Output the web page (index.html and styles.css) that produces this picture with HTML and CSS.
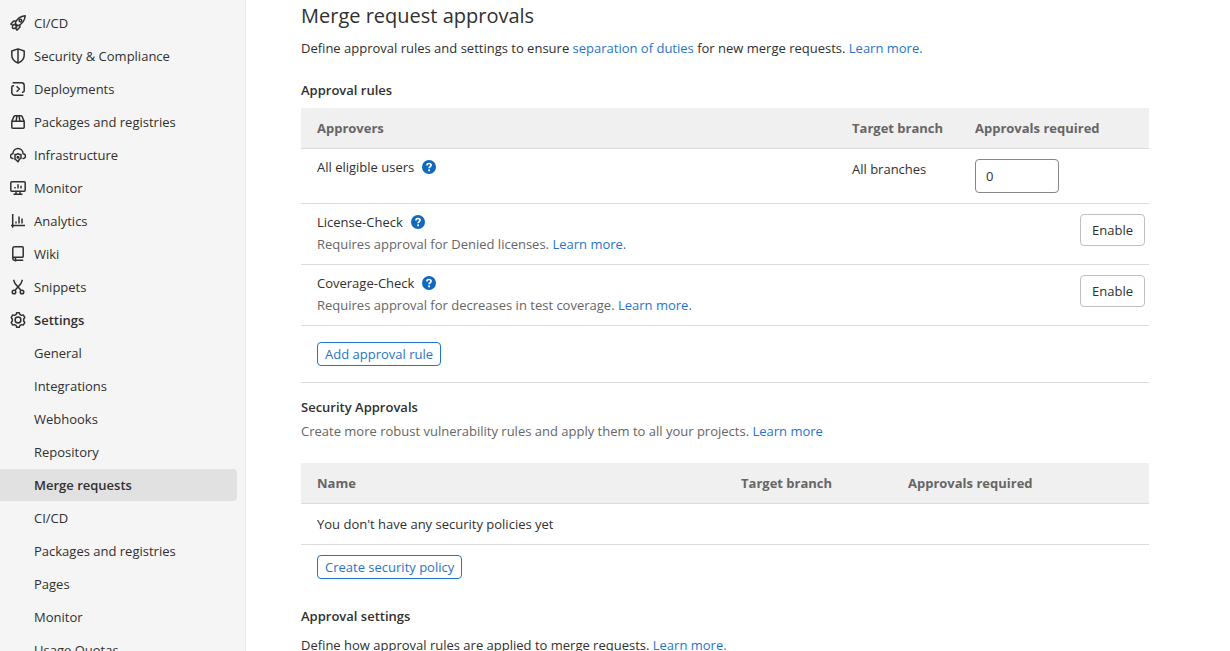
FILE: index.html
```html
<!DOCTYPE html>
<html lang="en">
<head>
<meta charset="utf-8">
<meta name="viewport" content="width=device-width, initial-scale=1">
<title>Merge request approvals</title>
<link rel="stylesheet" href="styles.css">
</head>
<body>
<svg class="sprite" aria-hidden="true">
  <symbol id="help" viewBox="0 0 16 16">
    <circle cx="8" cy="8" r="8" fill="#1068bf"/>
    <path d="M5.6 6.200C5.600 4.800 6.600 4 8 4s2.400.8 2.400 2.100c0 1.600-2.300 1.700-2.300 3.200" fill="none" stroke="#fff" stroke-width="1.9"/>
    <circle cx="8.100" cy="11.800" r="1.200" fill="#fff"/>
  </symbol>
</svg>
<div class="shell">
  <nav class="sidebar" aria-label="Project">
    <ul class="menu">
      <li><a class="item" href="#"><svg class="icon" viewBox="0 0 16 16"><path d="M5.200 8.200C7 3.800 10.300 1.300 15.200.8c-.4 4.900-2.900 8.200-7.400 10zM5.200 8.200l2.600 2.600M6.300 6.100H3.700L.9 9.100l2 1.200M9.900 9.700v2.600L6.900 15.100l-1.200-2M4.300 9.300c-2 1-2 3.100-1.600 4 1.200.3 3.200.2 4.100-1.600M4.300 9.300l2.500 2.400"/><circle cx="10.400" cy="5.600" r="1.300"/></svg>CI/CD</a></li>
      <li><a class="item" href="#"><svg class="icon" viewBox="0 0 16 16"><path d="M8 .9 14.200 3v4.200c0 3.500-2.200 6.200-6.200 7.900C4 13.400 1.800 10.700 1.800 7.200V3zM8 .9v14.200"/></svg>Security &amp; Compliance</a></li>
      <li><a class="item" href="#"><svg class="icon" viewBox="0 0 16 16"><path d="M2.600 1.800h8.900a2.700 2.700 0 0 1 2.700 2.700v5.300c0 .8-.6 1.400-1.400 1.400h-.9M13.400 14.200H4.500a2.700 2.700 0 0 1-2.700-2.700V6.200c0-.8.6-1.400 1.400-1.400h.9M6.600 5.200 9.400 8l-2.800 2.800"/></svg>Deployments</a></li>
      <li><a class="item" href="#"><svg class="icon" viewBox="0 0 16 16"><path d="M1.800 7.200h12.400v6c0 .6-.4 1-1 1H2.800c-.6 0-1-.4-1-1zM1.800 7.200l2.100-4.600c.3-.5.6-.8 1.200-.8h5.800c.6 0 .9.300 1.200.8l2.100 4.600M7 1.800l-.9 5.400M9 1.800l.9 5.400"/></svg>Packages and registries</a></li>
      <li><a class="item" href="#"><svg class="icon" viewBox="0 0 16 16"><path d="M3.500 11.500H3A2.400 2.400 0 0 1 2.900 6.700C3 3.700 5.200 1.400 8 1.400s5 2.300 5.100 5.300a2.400 2.400 0 0 1-.1 4.800h-.5M8 6.600l1.300.8 1.700.1v3.800l-1.500.9L8 14.800l-1.500-1.600-1.500-.9V7.500l1.700-.1z"/><circle cx="8" cy="10.200" r=".8"/></svg>Infrastructure</a></li>
      <li><a class="item" href="#"><svg class="icon" viewBox="0 0 16 16"><path d="M1.700 1.800h12.600c.5 0 .9.400.9.900v7.600c0 .5-.4.900-.9.900H1.700c-.5 0-.9-.4-.9-.9V2.700c0-.5.400-.9.900-.9zM6 11.200v3M10 11.200v3M3.500 14.200h9M5 7.100v1.500M8 4.200v4.400M11 5.700v2.900"/></svg>Monitor</a></li>
      <li><a class="item" href="#"><svg class="icon" viewBox="0 0 16 16"><path d="M2.700 1v13.800M1 12.400h14M6 8.500v2M9 3.500v7M12 5.500v5"/></svg>Analytics</a></li>
      <li><a class="item" href="#"><svg class="icon" viewBox="0 0 16 16"><path d="M13.200 11.200V1.800c0-.6-.4-1-1-1H4.500a1.700 1.700 0 0 0-1.700 1.700v10.100c0 .9.700 1.600 1.600 1.600h8.800M13.200 11.200H4.300c-.9 0-1.500.7-1.500 1.500M5.500 11.200v4.300"/></svg>Wiki</a></li>
      <li><a class="item" href="#"><svg class="icon" viewBox="0 0 16 16"><path d="M3.600.7 5 4.600l5.900 6.700M12.400.7 11 4.600l-5.900 6.700"/><circle cx="4" cy="13" r="1.800"/><circle cx="12" cy="13" r="1.800"/></svg>Snippets</a></li>
      <li><a class="item strong" href="#"><svg class="icon" viewBox="0 0 16 16"><path d="M6.700.8h2.600l.5 1.600 1.700 1 1.700-.5 1.600 2.400L13.700 7v2l1.100 1.700-1.600 2.400-1.700-.5-1.700 1-.5 1.600H6.700l-.5-1.600-1.700-1-1.700.5-1.600-2.400L2.300 9V7L1.200 5.300l1.600-2.400 1.700.5 1.700-1z"/><circle cx="8" cy="8" r="2.900"/></svg>Settings</a>
        <ul class="menu submenu">
          <li><a class="item" href="#">General</a></li>
          <li><a class="item" href="#">Integrations</a></li>
          <li><a class="item" href="#">Webhooks</a></li>
          <li><a class="item" href="#">Repository</a></li>
          <li><a class="item strong active" href="#" aria-current="page">Merge requests</a></li>
          <li><a class="item" href="#">CI/CD</a></li>
          <li><a class="item" href="#">Packages and registries</a></li>
          <li><a class="item" href="#">Pages</a></li>
          <li><a class="item" href="#">Monitor</a></li>
          <li><a class="item" href="#">Usage Quotas</a></li>
        </ul>
      </li>
    </ul>
  </nav>
  <main class="content">
    <h1 class="title">Merge request approvals</h1>
    <p class="intro">Define approval rules and settings to ensure <a href="#">separation of duties</a> for new merge requests. <a href="#">Learn more.</a></p>

    <section>
      <h2 class="heading">Approval rules</h2>
      <table class="table rules">
        <colgroup><col><col class="col-branch"><col class="col-count"><col class="col-action"></colgroup>
        <thead>
          <tr><th scope="col">Approvers</th><th scope="col">Target branch</th><th scope="col" colspan="2" id="required">Approvals required</th></tr>
        </thead>
        <tbody>
          <tr>
            <td class="name">All eligible users<a class="help" href="#" aria-label="Help: eligible users"><svg viewBox="0 0 16 16"><use href="#help"/></svg></a></td>
            <td>All branches</td>
            <td><input class="count" type="text" inputmode="numeric" value="0" aria-labelledby="required"></td>
            <td></td>
          </tr>
          <tr>
            <td class="name" colspan="3">License-Check<a class="help" href="#" aria-label="Help: License-Check"><svg viewBox="0 0 16 16"><use href="#help"/></svg></a>
              <p class="muted">Requires approval for Denied licenses. <a href="#">Learn more.</a></p></td>
            <td class="action"><button class="button" type="button">Enable</button></td>
          </tr>
          <tr>
            <td class="name" colspan="3">Coverage-Check<a class="help" href="#" aria-label="Help: Coverage-Check"><svg viewBox="0 0 16 16"><use href="#help"/></svg></a>
              <p class="muted">Requires approval for decreases in test coverage. <a href="#">Learn more.</a></p></td>
            <td class="action"><button class="button" type="button">Enable</button></td>
          </tr>
        </tbody>
      </table>
      <div class="add-row"><button class="button small" type="button">Add approval rule</button></div>
    </section>

    <section class="security">
      <h2 class="heading">Security Approvals</h2>
      <p class="muted">Create more robust vulnerability rules and apply them to all your projects. <a href="#">Learn more</a></p>
      <table class="table policies">
        <colgroup><col class="col-half"><col class="col-policy-branch"><col></colgroup>
        <thead>
          <tr><th scope="col">Name</th><th scope="col">Target branch</th><th scope="col">Approvals required</th></tr>
        </thead>
        <tbody>
          <tr><td colspan="3">You don't have any security policies yet</td></tr>
        </tbody>
      </table>
      <div class="create-row"><button class="button small" type="button">Create security policy</button></div>
    </section>

    <section class="settings">
      <h2 class="heading">Approval settings</h2>
      <p>Define how approval rules are applied to merge requests. <a href="#">Learn more.</a></p>
    </section>
  </main>
</div>
</body>
</html>
```

FILE: styles.css
```css
* {
  box-sizing: border-box;
}

body {
  margin: 0;
  background: #fff;
  color: #303030;
  font: 13px/20px "Open Sans", "Noto Sans", sans-serif;
}

h1,
h2,
p,
ul {
  margin: 0;
  padding: 0;
}

a {
  color: #1f75cb;
  text-decoration: none;
}

.sprite {
  position: absolute;
  width: 0;
  height: 0;
}

.shell {
  display: flex;
  height: 100vh;
  overflow: hidden;
}

/* Sidebar */
.sidebar {
  flex: 0 0 246px;
  padding: 7px 8px 0 0;
  background: #f5f5f5;
  border-right: 1px solid #e9e9e9;
}

.menu {
  list-style: none;
}

.item {
  display: flex;
  align-items: center;
  gap: 8px;
  height: 32px;
  margin-bottom: 1px;
  padding-left: 10px;
  border-radius: 0 4px 4px 0;
  color: #303030;
}

.submenu .item {
  padding-left: 34px;
}

.strong {
  font-weight: 600;
}

.active {
  background: #e1e1e1;
}

.icon {
  width: 16px;
  height: 16px;
  fill: none;
  stroke: #303030;
  stroke-width: 1.5;
  stroke-linejoin: round;
}

/* Content */
.content {
  flex: 1;
  padding: 4px 81px 0 55px;
}

.title {
  font-size: 20px;
  line-height: 24px;
  font-weight: 500;
}

.intro {
  margin: 10px 0 22px;
}

.heading {
  font-size: 13px;
  line-height: 20px;
  font-weight: 600;
}

.muted {
  color: #666;
}

.table {
  width: 100%;
  border-collapse: separate;
  border-spacing: 0;
  table-layout: fixed;
}

.table th,
.table td {
  padding: 10px 16px;
  border-bottom: 1px solid #dbdbdb;
  text-align: left;
  vertical-align: top;
}

.table th {
  background: #f0f0f0;
  color: #666;
  font-weight: 700;
  white-space: nowrap;
}

.rules {
  margin-top: 8px;
}

.col-branch {
  width: 123px;
}

.col-count {
  width: 116px;
}

.col-action {
  width: 74px;
}

.col-half {
  width: 50%;
}

.col-policy-branch {
  width: 167px;
}

.table .name {
  padding-top: 8px;
  padding-bottom: 10px;
}

.name .muted {
  margin-top: 2px;
}

.table .action {
  padding-left: 0;
  padding-right: 4px;
  text-align: right;
}

.help {
  margin-left: 8px;
}

.help svg {
  width: 14px;
  height: 14px;
  vertical-align: -2px;
}

.count {
  display: block;
  width: 84px;
  height: 34px;
  padding: 0 10px;
  border: 1px solid #868686;
  border-radius: 4px;
  background: #fff;
  color: inherit;
  font: inherit;
}

.button {
  height: 32px;
  padding: 0 11px;
  border: 1px solid #bfbfbf;
  border-radius: 4px;
  background: #fff;
  color: #303030;
  font: inherit;
  white-space: nowrap;
}

.small {
  display: block;
  height: 24px;
  padding: 0 7px;
  line-height: 16px;
  border-color: #1f75cb;
  color: #1f75cb;
}

.add-row {
  padding: 16px;
  border-bottom: 1px solid #dbdbdb;
}

.security {
  margin-top: 14px;
}

.security > .muted {
  margin-top: 4px;
}

.policies {
  margin-top: 22px;
}

.create-row {
  padding: 10px 16px 0;
}

.settings {
  margin-top: 27px;
}

.settings p {
  margin-top: 9px;
}
```
